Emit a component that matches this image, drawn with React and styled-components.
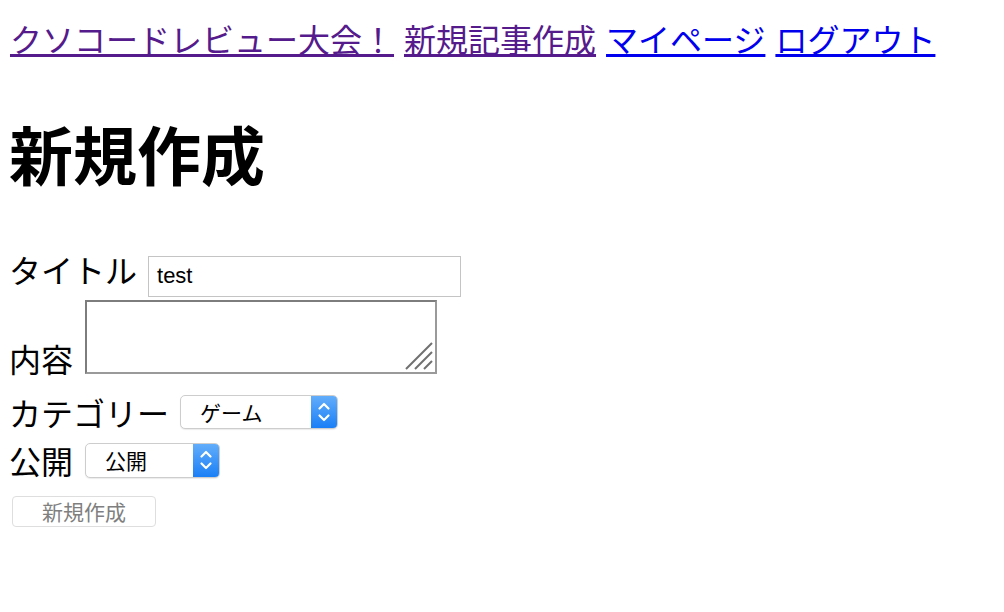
import { useState } from "react";
import styled, { createGlobalStyle } from "styled-components";

const GlobalStyle = createGlobalStyle`
  body {
    margin: 8px 8px 8px 9px;
    background: #fff;
    color: #000;
    font-family: "Noto Sans CJK JP", "Noto Sans", sans-serif;
  }
`;

const Nav = styled.nav`
  display: flex;
  gap: 10px;
  margin-top: 7px;
  padding-left: 1px;
  font-size: 32px;
  line-height: 46px;
`;

const NavLink = styled.a`
  color: ${({ $visited }) => ($visited ? "#551a8b" : "#0000ee")};
  text-decoration: underline;
`;

const Heading = styled.h1`
  margin: 45px 0 54px;
  font-size: 64px;
  font-weight: 700;
  line-height: 93px;
`;

const Form = styled.form`
  display: flex;
  flex-direction: column;
  align-items: flex-start;
`;

const Row = styled.div`
  display: flex;
  align-items: ${({ $align }) => $align || "center"};
  gap: ${({ $gap }) => $gap || 12}px;
  margin-top: ${({ $mt }) => $mt || 0}px;
`;

const Label = styled.label`
  font-size: 32px;
  line-height: 32px;
`;

const TextInput = styled.input`
  box-sizing: border-box;
  width: 313px;
  height: 41px;
  padding: 0 8px;
  border: 1px solid #c4c4c4;
  font-family: "Liberation Sans", Arial, sans-serif;
  font-size: 22px;
  color: #000;
  outline: none;
`;

const AreaWrap = styled.div`
  position: relative;
  display: flex;
`;

const TextArea = styled.textarea`
  box-sizing: border-box;
  width: 352px;
  height: 74px;
  border: 2px solid;
  border-color: #7d7d7d #9a9a9a #9a9a9a #7d7d7d;
  resize: none;
  outline: none;
  font-size: 20px;
`;

const Grip = styled.svg`
  position: absolute;
  right: 4px;
  bottom: 4px;
  width: 28px;
  height: 28px;
`;

const SelectBox = styled.div`
  display: flex;
  box-sizing: border-box;
  width: ${({ $w }) => $w}px;
  height: ${({ $h }) => $h}px;
  border: 1px solid #cdcdcd;
  border-radius: 5px;
  box-shadow: 0 1px 1px rgba(0, 0, 0, 0.08);
  background: #fff;
  overflow: hidden;
`;

const NativeSelect = styled.select`
  flex: 1;
  min-width: 0;
  appearance: none;
  border: none;
  background: transparent;
  padding: 0 0 0 19px;
  font-family: "Noto Sans CJK JP", sans-serif;
  font-size: 21px;
  color: #000;
  outline: none;
`;

const Stepper = styled.span`
  display: flex;
  align-items: center;
  justify-content: center;
  width: 26px;
  background: linear-gradient(#62adfb, #1a7ff6);
`;

const SubmitButton = styled.button`
  box-sizing: border-box;
  width: 144px;
  height: 31px;
  margin: 18px 0 0 3px;
  padding: 0;
  border: 1px solid #dedede;
  border-radius: 4px;
  background: #fff;
  color: #7f7f7f;
  font-family: "Noto Sans CJK JP", sans-serif;
  font-size: 21px;
  line-height: 29px;
`;

const Chevrons = () => (
  <svg width="14" height="26" viewBox="0 0 14 26">
    <path d="M2.5 9.5 L7 5 L11.5 9.5" fill="none" stroke="#fff" strokeWidth="2.2" strokeLinecap="round" strokeLinejoin="round" />
    <path d="M2.5 16.5 L7 21 L11.5 16.5" fill="none" stroke="#fff" strokeWidth="2.2" strokeLinecap="round" strokeLinejoin="round" />
  </svg>
);

const Select = ({ width, height, options, value, onChange }) => (
  <SelectBox $w={width} $h={height}>
    <NativeSelect value={value} onChange={(e) => onChange(e.target.value)}>
      {options.map((o) => (
        <option key={o}>{o}</option>
      ))}
    </NativeSelect>
    <Stepper>
      <Chevrons />
    </Stepper>
  </SelectBox>
);

const App = () => {
  const [title, setTitle] = useState("test");
  const [body, setBody] = useState("");
  const [category, setCategory] = useState("ゲーム");
  const [status, setStatus] = useState("公開");

  return (
    <>
      <GlobalStyle />
      <Nav>
        <NavLink href="#" $visited>クソコードレビュー大会！</NavLink>
        <NavLink href="#" $visited>新規記事作成</NavLink>
        <NavLink href="#">マイページ</NavLink>
        <NavLink href="#">ログアウト</NavLink>
      </Nav>
      <Heading>新規作成</Heading>
      <Form onSubmit={(e) => e.preventDefault()}>
        <Row $align="baseline" $gap={11}>
          <Label>タイトル</Label>
          <TextInput value={title} onChange={(e) => setTitle(e.target.value)} />
        </Row>
        <Row $align="flex-end" $mt={3}>
          <Label>内容</Label>
          <AreaWrap>
            <TextArea value={body} onChange={(e) => setBody(e.target.value)} />
            <Grip viewBox="0 0 28 28">
              <path d="M27 1 L1 27 M27 10 L10 27 M27 19 L19 27" stroke="#707070" strokeWidth="2" />
            </Grip>
          </AreaWrap>
        </Row>
        <Row $mt={21} $gap={11}>
          <Label>カテゴリー</Label>
          <Select width={158} height={34} options={["ゲーム", "アニメ", "その他"]} value={category} onChange={setCategory} />
        </Row>
        <Row $mt={14}>
          <Label>公開</Label>
          <Select width={135} height={35} options={["公開", "非公開"]} value={status} onChange={setStatus} />
        </Row>
        <SubmitButton type="submit">新規作成</SubmitButton>
      </Form>
    </>
  );
};

export default App;
